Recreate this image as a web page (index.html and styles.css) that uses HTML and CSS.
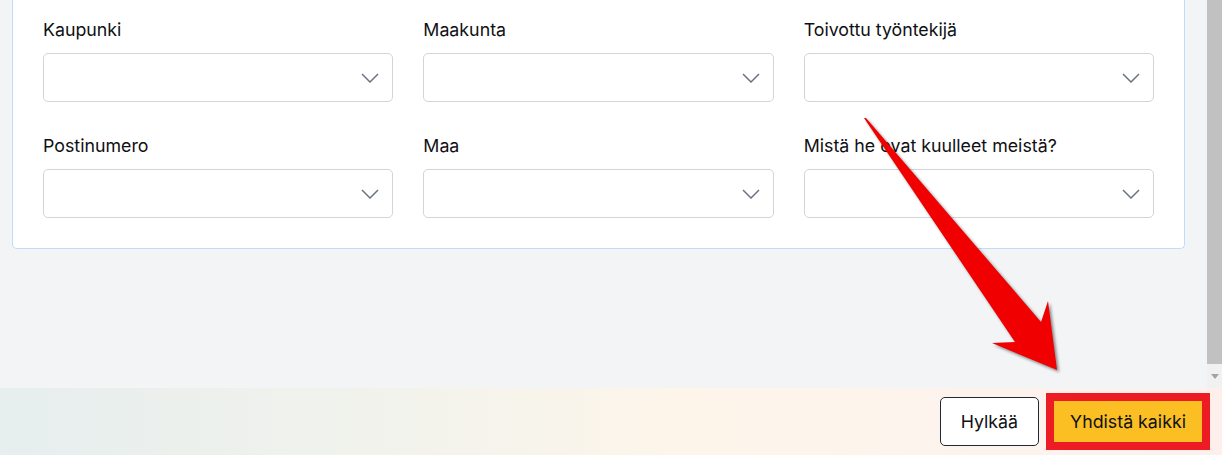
FILE: index.html
```html
<!DOCTYPE html>
<html lang="fi">
<head>
<meta charset="utf-8">
<title>Lomake</title>
<link rel="stylesheet" href="styles.css">
</head>
<body>
<div class="app">
  <div class="main">
    <div class="content">
      <div class="card">
        <div class="grid">
          <div class="field">
            <label class="label">Kaupunki</label>
            <div class="select"><svg class="chev" viewBox="0 0 18 10"><path d="M1 1 L9 9 L17 1"/></svg></div>
          </div>
          <div class="field">
            <label class="label">Maakunta</label>
            <div class="select"><svg class="chev" viewBox="0 0 18 10"><path d="M1 1 L9 9 L17 1"/></svg></div>
          </div>
          <div class="field">
            <label class="label">Toivottu työntekijä</label>
            <div class="select"><svg class="chev" viewBox="0 0 18 10"><path d="M1 1 L9 9 L17 1"/></svg></div>
          </div>
          <div class="field">
            <label class="label">Postinumero</label>
            <div class="select"><svg class="chev" viewBox="0 0 18 10"><path d="M1 1 L9 9 L17 1"/></svg></div>
          </div>
          <div class="field">
            <label class="label">Maa</label>
            <div class="select"><svg class="chev" viewBox="0 0 18 10"><path d="M1 1 L9 9 L17 1"/></svg></div>
          </div>
          <div class="field">
            <label class="label">Mistä he ovat kuulleet meistä?</label>
            <div class="select"><svg class="chev" viewBox="0 0 18 10"><path d="M1 1 L9 9 L17 1"/></svg></div>
          </div>
        </div>
      </div>
    </div>
    <div class="scrollbar">
      <div class="thumb"></div>
      <div class="sb-btn"><span class="sb-tri"></span></div>
    </div>
  </div>
  <footer class="consent">
    <button class="btn btn-reject">Hylkää</button>
    <button class="btn btn-accept">Yhdistä kaikki</button>
  </footer>
  <svg class="annot" viewBox="0 0 1222 455" width="1222" height="455">
    <polygon class="annot-arrow" points="864,118 866,118 1041,322 1048,301 1057,370 992,343 1015,342"/>
  </svg>
</div>
</body>
</html>
```

FILE: styles.css
```css
* { box-sizing: border-box; }
html, body { margin: 0; padding: 0; }
body {
  font-family: "Inter", "Liberation Sans", sans-serif;
  color: #0f0f14;
  background: #f3f4f6;
}
.app {
  position: relative;
  width: 1222px;
  height: 455px;
  display: flex;
  flex-direction: column;
  overflow: hidden;
}
.main {
  height: 388px;
  display: flex;
  background: #f3f4f6;
}
.content {
  flex: 1;
  padding: 0 22px 0 12px;
}
.card {
  background: #fff;
  border: 1px solid #bfdbfe;
  border-top: none;
  border-radius: 0 0 5px 5px;
  padding: 18px 30px 30px 30px;
}
.grid {
  display: grid;
  grid-template-columns: repeat(3, 1fr);
  column-gap: 30px;
  row-gap: 32px;
}
.field { display: flex; flex-direction: column; }
.label {
  font-size: 17.8px;
  line-height: 24px;
  margin-bottom: 11px;
  color: #0f0f14;
}
.select {
  height: 49px;
  border: 1px solid #d1d5db;
  border-radius: 5px;
  background: #fff;
  display: flex;
  align-items: center;
  justify-content: flex-end;
  padding-right: 13px;
}
.chev {
  width: 18px;
  height: 10px;
  fill: none;
  stroke: #6b7280;
  stroke-width: 1.5;
}
.scrollbar {
  width: 15px;
  background: #f1f1f1;
  display: flex;
  flex-direction: column;
}
.thumb {
  height: 364px;
  background: #c1c1c1;
}
.sb-btn {
  flex: 1;
  display: flex;
  align-items: center;
  justify-content: center;
}
.sb-tri {
  width: 0;
  height: 0;
  border-left: 4.5px solid transparent;
  border-right: 4.5px solid transparent;
  border-top: 5px solid #a3a3a3;
}
.consent {
  height: 67px;
  display: flex;
  align-items: center;
  justify-content: flex-end;
  gap: 11px;
  padding-right: 16px;
  background: linear-gradient(90deg, #e6eeee 0%, #f3f3ec 35%, #fdf5ea 55%, #fdf3ed 80%, #fdf0ec 100%);
}
.btn {
  font-family: "Inter", "Liberation Sans", sans-serif;
  font-size: 17.8px;
  height: 49px;
  padding: 0 20px;
  color: #0f0f14;
  cursor: pointer;
}
.btn-reject {
  background: #fff;
  border: 1px solid #1f2937;
  border-radius: 5px;
}
.btn-accept {
  background: #fbbf24;
  border: none;
  border-radius: 0;
  outline: 8px solid #ed1c24;
  outline-offset: -4px;
}
.annot {
  position: absolute;
  left: 0;
  top: 0;
  pointer-events: none;
  overflow: visible;
}
.annot-arrow {
  fill: #f00000;
  filter: drop-shadow(2px 2px 1.5px rgba(0, 0, 0, 0.45));
}
```
